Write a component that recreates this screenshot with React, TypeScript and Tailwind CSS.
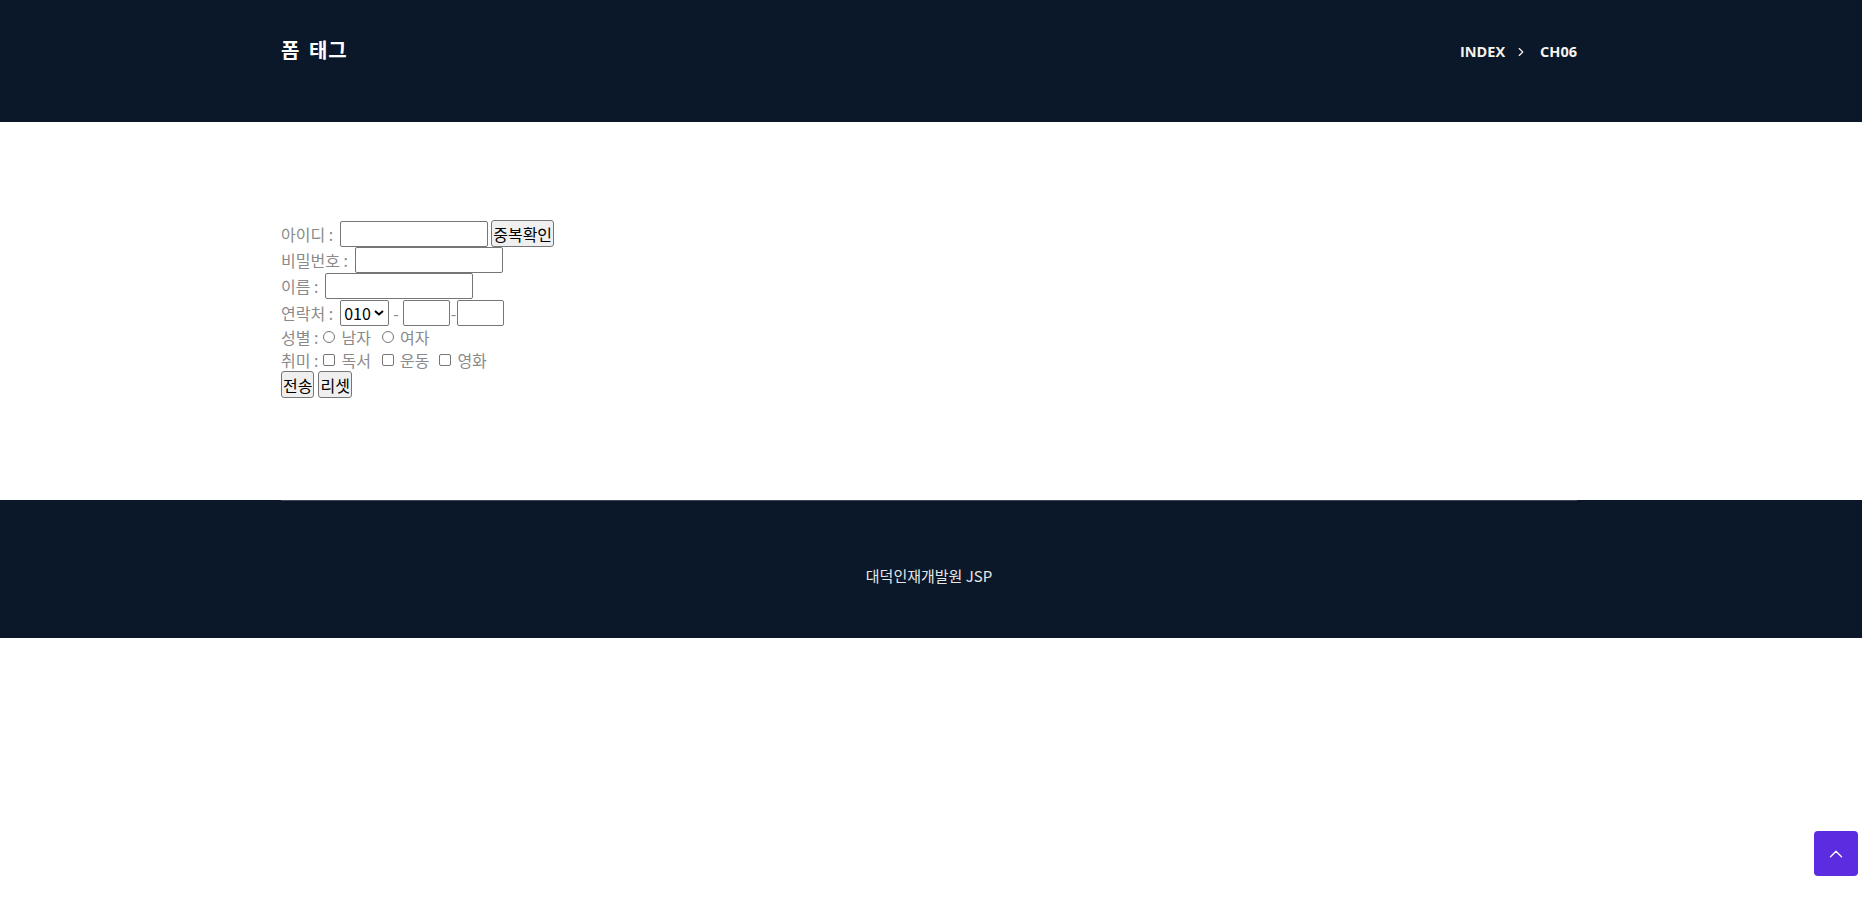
import { ChevronRight, ChevronUp } from 'lucide-react';

const kr = { fontFamily: '"Noto Sans CJK KR", "Noto Sans", sans-serif' };

function TextInput({ w }: { w: string }) {
    return (
        <input
            type="text"
            className={`${w} h-[26px] border border-[#767676] rounded-[2px] bg-white px-1 text-[15px] text-black`}
        />
    );
}

function Btn({ children }: { children: React.ReactNode }) {
    return (
        <button
            type="button"
            className="h-[27px] px-[1px] border border-[#767676] bg-[#efefef] rounded-[3px] text-black text-[16px] leading-none"
        >
            {children}
        </button>
    );
}

function Radio({ label }: { label: string }) {
    return (
        <label className="flex items-center">
            <input
                type="radio"
                name="gender"
                className="appearance-none w-[12px] h-[12px] rounded-full border border-[#767676] bg-white ml-[5px] mr-[6px]"
            />
            <span>{label}</span>
        </label>
    );
}

function Check({ label }: { label: string }) {
    return (
        <label className="flex items-center">
            <input
                type="checkbox"
                className="appearance-none w-[12px] h-[12px] rounded-[2px] border border-[#767676] bg-white ml-[5px] mr-[6px]"
            />
            <span>{label}</span>
        </label>
    );
}

export default function App() {
    return (
        <div className="bg-white" style={kr}>
            <header className="h-[122px] bg-[#0a1829]">
                <div className="w-[1300px] mx-auto h-full flex items-start justify-between pt-[35px] pr-[4px]">
                    <h1 className="text-white text-[20px] font-bold leading-[30px] tracking-[1px] [word-spacing:3px]">
                        폼 태그
                    </h1>
                    <nav
                        className="flex items-center text-[14.5px] font-bold text-[#f5f3ee] uppercase pt-[6px]"
                        style={{ fontFamily: '"Open Sans", sans-serif' }}
                    >
                        <span>INDEX</span>
                        <ChevronRight size={14} strokeWidth={2} className="ml-[9px] mr-[12px]" />
                        <span>CH06</span>
                    </nav>
                </div>
            </header>

            <main className="w-[1300px] mx-auto pt-[98px] pb-[102px]">
                <form className="flex flex-col text-[16px] text-[#8a8a8a]">
                    <div className="h-[27px] flex items-center gap-[3px]">
                        <span className="mr-[4px]">아이디 :</span>
                        <TextInput w="w-[148px]" />
                        <Btn>중복확인</Btn>
                    </div>
                    <div className="h-[26px] flex items-center gap-[3px]">
                        <span className="mr-[4px]">비밀번호 :</span>
                        <TextInput w="w-[148px]" />
                    </div>
                    <div className="h-[26px] flex items-center gap-[3px]">
                        <span className="mr-[4px]">이름 :</span>
                        <TextInput w="w-[148px]" />
                    </div>
                    <div className="h-[27px] flex items-center">
                        <span className="mr-[7px]">연락처 :</span>
                        <div className="relative">
                            <select className="appearance-none w-[49px] h-[26px] border border-[#767676] rounded-[2px] bg-white pl-[3px] text-[16px] text-black">
                                <option>010</option>
                                <option>011</option>
                                <option>016</option>
                            </select>
                            <svg
                                viewBox="0 0 10 6"
                                className="absolute right-[5px] top-[10px] w-[10px] h-[6px] pointer-events-none"
                            >
                                <path d="M1 1l4 3.5L9 1" fill="none" stroke="#000" strokeWidth="2" />
                            </svg>
                        </div>
                        <span className="mx-[4px]">-</span>
                        <TextInput w="w-[47px]" />
                        <span className="mx-[1px]">-</span>
                        <TextInput w="w-[47px]" />
                    </div>
                    <div className="h-[22px] flex items-center">
                        <span>성별 :</span>
                        <Radio label="남자" />
                        <span className="w-[6px]" />
                        <Radio label="여자" />
                    </div>
                    <div className="h-[23px] flex items-center">
                        <span>취미 :</span>
                        <Check label="독서" />
                        <span className="w-[6px]" />
                        <Check label="운동" />
                        <span className="w-[5px]" />
                        <Check label="영화" />
                    </div>
                    <div className="h-[27px] flex items-center gap-[4px]">
                        <Btn>전송</Btn>
                        <Btn>리셋</Btn>
                    </div>
                </form>
            </main>

            <footer className="h-[138px] bg-[#0a1829]">
                <div className="w-[1300px] mx-auto h-full pr-[4px]">
                    <div className="h-full border-t border-[#3d4654] flex items-center justify-center pt-[14px]">
                        <p className="text-[15px] text-[#e6e6e6]">대덕인재개발원 JSP</p>
                    </div>
                </div>
            </footer>

            <button
                type="button"
                className="fixed right-[4px] bottom-[22px] w-[44px] h-[45px] rounded-[4px] bg-[#5b2ce0] flex items-center justify-center text-white"
            >
                <ChevronUp size={22} strokeWidth={1.5} />
            </button>
        </div>
    );
}
